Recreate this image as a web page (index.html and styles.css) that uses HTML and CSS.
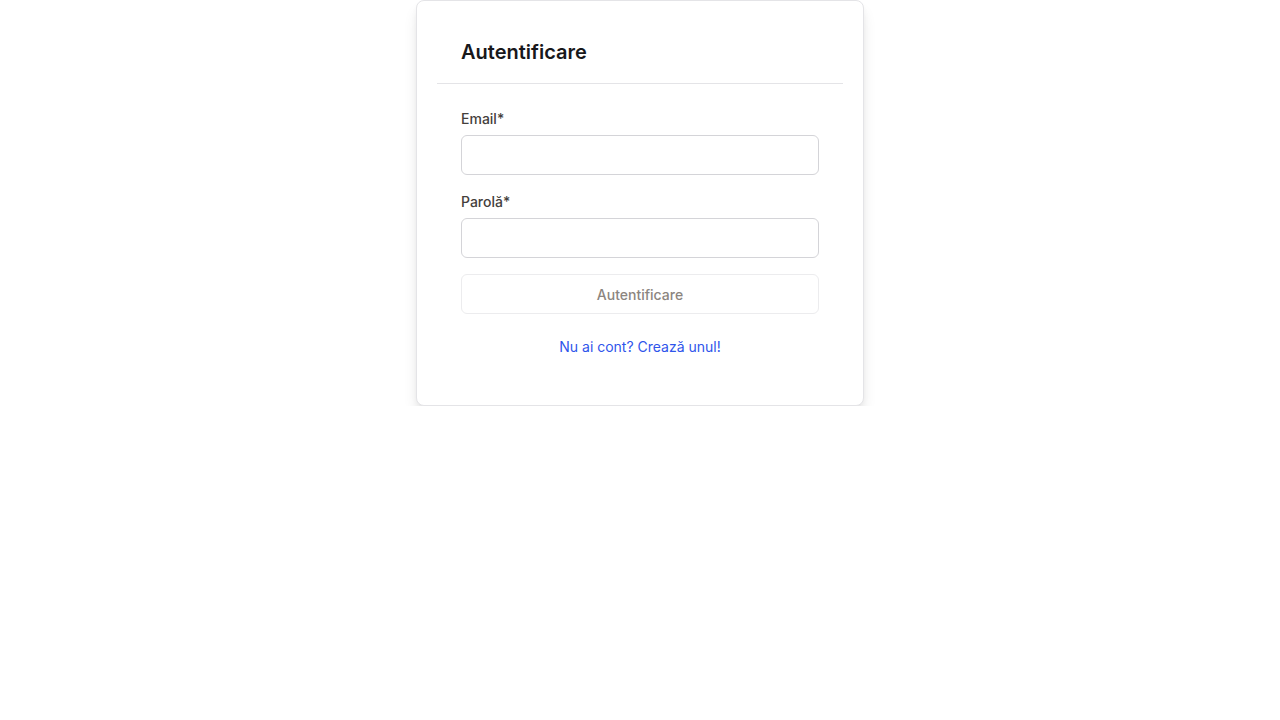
FILE: index.html
```html
<!DOCTYPE html>
<html lang="ro">
<head>
<meta charset="utf-8">
<title>Autentificare</title>
<link rel="stylesheet" href="styles.css">
</head>
<body>
<main class="page">
  <section class="card">
    <header class="card-header">
      <h1 class="card-title">Autentificare</h1>
    </header>
    <form class="card-body">
      <div class="field">
        <label class="label" for="email">Email*</label>
        <input class="input" id="email" type="email">
      </div>
      <div class="field">
        <label class="label" for="password">Parolă*</label>
        <input class="input" id="password" type="password">
      </div>
      <button class="btn" type="button" disabled>Autentificare</button>
      <a class="link" href="#">Nu ai cont? Crează unul!</a>
    </form>
  </section>
</main>
</body>
</html>
```
FILE: styles.css
```css
* { box-sizing: border-box; }
html, body { margin: 0; padding: 0; background: #ffffff; }
body {
  font-family: Inter, "Noto Sans", "Liberation Sans", sans-serif;
  color: #27272a;
}
.page {
  display: flex;
  justify-content: center;
  align-items: flex-start;
}
.card {
  width: 448px;
  border: 1px solid #e4e4e7;
  border-radius: 8px;
  background: #fff;
  padding: 0 20px 20px;
  box-shadow: 0 10px 16px -3px rgba(0,0,0,0.12), 0 4px 8px -4px rgba(0,0,0,0.12);
}
.card-header {
  padding: 37px 24px 17px;
  border-bottom: 1px solid #e4e4e7;
}
.card-title {
  margin: 0;
  font-size: 20px;
  line-height: 28px;
  font-weight: 600;
  color: #18181b;
}
.card-body {
  padding: 25px 24px 28px;
  display: flex;
  flex-direction: column;
  gap: 16px;
}
.field {
  display: flex;
  flex-direction: column;
  gap: 6px;
}
.field + .field { margin-top: 1px; }
.label {
  font-size: 14px;
  line-height: 20px;
  font-weight: 500;
  color: #44403c;
}
.input {
  height: 40px;
  width: 100%;
  border: 1px solid #d4d4d8;
  border-radius: 6px;
  background: #fff;
  font: inherit;
  padding: 0 12px;
  outline: none;
}
.btn {
  height: 40px;
  width: 100%;
  border: 1px solid #ececee;
  border-radius: 6px;
  background: #fff;
  font-family: inherit;
  font-size: 14px;
  font-weight: 500;
  color: #8c8580;
}
.link {
  margin-top: 7px;
  text-align: center;
  font-size: 14px;
  line-height: 20px;
  color: #2f55eb;
  text-decoration: none;
}
```
